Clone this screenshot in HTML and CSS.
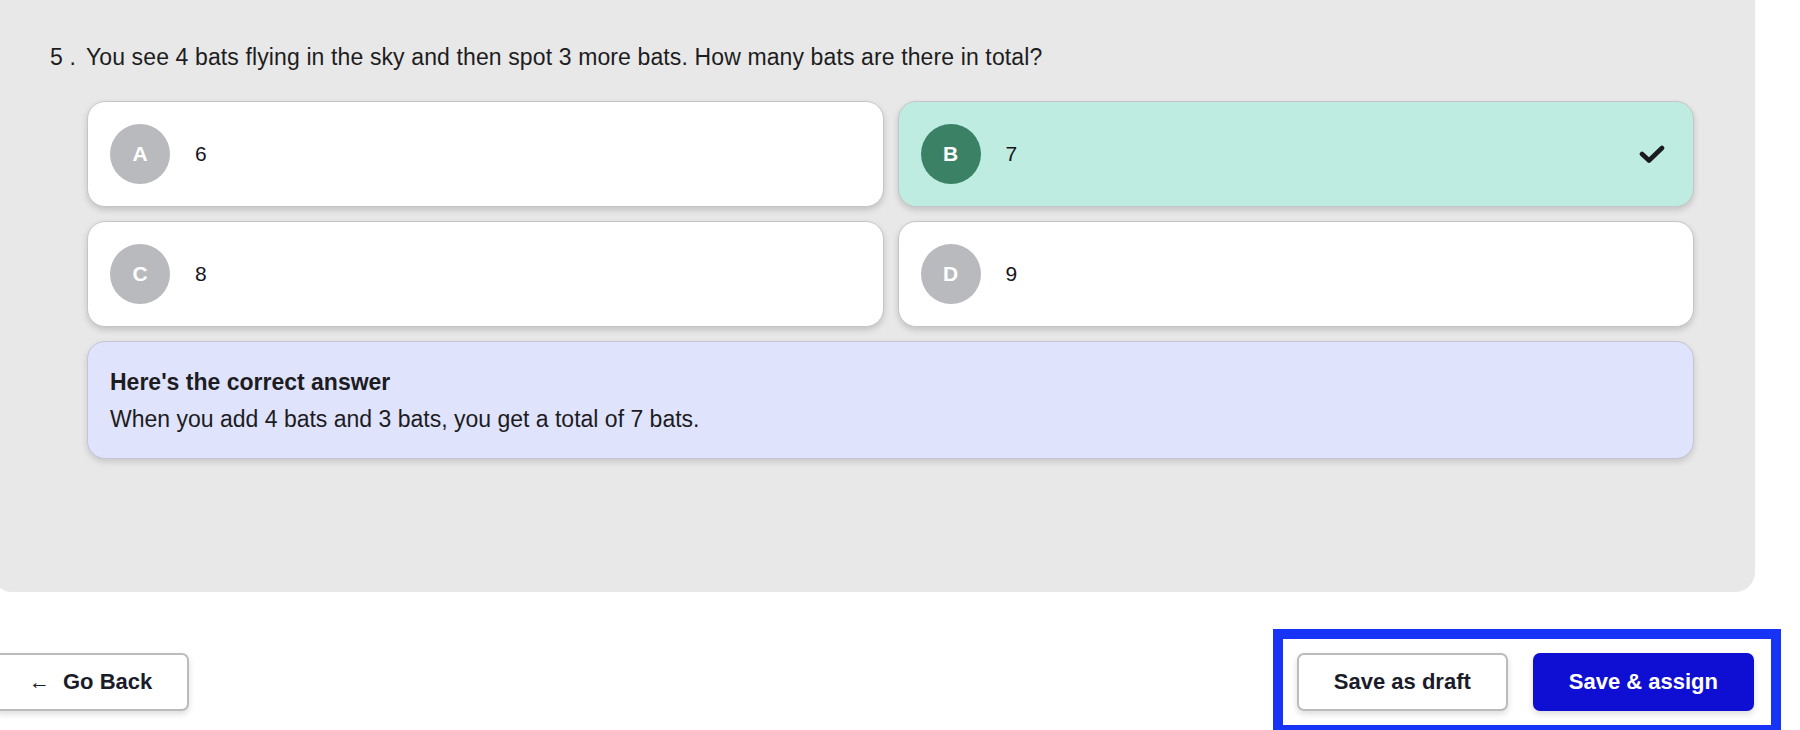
FILE: index.html
```html
<!DOCTYPE html>
<html lang="en">
<head>
<meta charset="utf-8">
<title>Question preview</title>
<link rel="stylesheet" href="styles.css">
</head>
<body>
<main class="panel">
  <p class="question"><span class="qnum">5 .</span><span>You see 4 bats flying in the sky and then spot 3 more bats. How many bats are there in total?</span></p>
  <div class="options">
    <div class="option">
      <span class="badge">A</span><span class="value">6</span>
    </div>
    <div class="option correct">
      <span class="badge">B</span><span class="value">7</span>
      <svg class="check" width="26" height="20" viewBox="0 0 26 20" aria-hidden="true"><polyline points="3,10 10,16.5 23,4" fill="none" stroke="#1b1b1f" stroke-width="4.6" stroke-linecap="round" stroke-linejoin="round"/></svg>
    </div>
    <div class="option">
      <span class="badge">C</span><span class="value">8</span>
    </div>
    <div class="option">
      <span class="badge">D</span><span class="value">9</span>
    </div>
    <div class="explain">
      <p class="explain-title">Here's the correct answer</p>
      <p class="explain-body">When you add 4 bats and 3 bats, you get a total of 7 bats.</p>
    </div>
  </div>
</main>
<footer class="footer">
  <button class="btn btn-back" type="button"><span class="arrow">&larr;</span>Go Back</button>
  <div class="actions">
    <button class="btn btn-draft" type="button">Save as draft</button>
    <button class="btn btn-assign" type="button">Save &amp; assign</button>
  </div>
</footer>
</body>
</html>
```

FILE: styles.css
```css
* { box-sizing: border-box; }

html, body {
  margin: 0;
  padding: 0;
  background: #ffffff;
  overflow: hidden;
}

body {
  width: 1800px;
  height: 730px;
  font-family: "Liberation Sans", Arial, sans-serif;
  color: #1c1c22;
}

.panel {
  width: 1763px;
  margin-left: -8px;
  background: #e8e8e8;
  border-radius: 0 0 20px 20px;
  padding: 45px 0 133px 58px;
}

.question {
  margin: 0;
  font-size: 23px;
  line-height: 24px;
  letter-spacing: 0.12px;
  display: flex;
  gap: 10px;
  color: #1d1d22;
}

.options {
  margin: 32px 0 0 37px;
  width: 1607px;
  display: grid;
  grid-template-columns: 1fr 1fr;
  gap: 14px;
}

.option {
  height: 106px;
  background: #ffffff;
  border: 1px solid #c6c6c8;
  border-radius: 18px;
  box-shadow: 0 3px 6px rgba(0, 0, 0, 0.16);
  display: flex;
  align-items: center;
  padding: 0 28px 0 22px;
}

.option.correct {
  background: #bfece1;
}

.badge {
  width: 60px;
  height: 60px;
  border-radius: 50%;
  background: #b9babe;
  color: #ffffff;
  font-weight: 700;
  font-size: 21px;
  display: flex;
  align-items: center;
  justify-content: center;
  flex: none;
}

.correct .badge {
  background: #3a8165;
}

.value {
  margin-left: 25px;
  font-size: 21px;
  color: #16161a;
  flex: 1;
}

.check {
  flex: none;
}

.explain {
  grid-column: 1 / -1;
  background: #e0e3fc;
  border: 1px solid #c3c5d4;
  border-radius: 18px;
  box-shadow: 0 3px 6px rgba(0, 0, 0, 0.14);
  padding: 26px 22px 25px;
}

.explain p {
  margin: 0;
  font-size: 23px;
  line-height: 28px;
}

.explain-title {
  font-weight: 700;
  margin-bottom: 9px !important;
}

.footer {
  display: flex;
  justify-content: space-between;
  align-items: flex-start;
  padding: 37px 19px 0 0;
}

.btn {
  font-family: "Liberation Sans", Arial, sans-serif;
  font-weight: 700;
  font-size: 22px;
  height: 58px;
  border-radius: 7px;
  cursor: pointer;
  display: inline-flex;
  align-items: center;
  justify-content: center;
}

.btn-back {
  margin-top: 24px;
  margin-left: -6px;
  padding: 0 35px 0 33px;
  background: #ffffff;
  color: #1b1c2a;
  border: 2px solid #bcbcc0;
  box-shadow: 0 3px 6px rgba(0, 0, 0, 0.14);
}

.arrow {
  font-weight: 400;
  font-size: 21px;
  margin-right: 13px;
}

.actions {
  display: flex;
  gap: 25px;
  border: 10px solid #1733f5;
  background: #ffffff;
  padding: 14px 17px 14px 14px;
}

.btn-draft {
  padding: 0 35px;
  background: #ffffff;
  color: #1b1c2a;
  border: 2px solid #bcbcc0;
  box-shadow: 0 3px 6px rgba(0, 0, 0, 0.14);
}

.btn-assign {
  padding: 0 36px;
  background: #0f0fd4;
  color: #ffffff;
  border: none;
  box-shadow: 0 3px 6px rgba(0, 0, 0, 0.14);
}
```
